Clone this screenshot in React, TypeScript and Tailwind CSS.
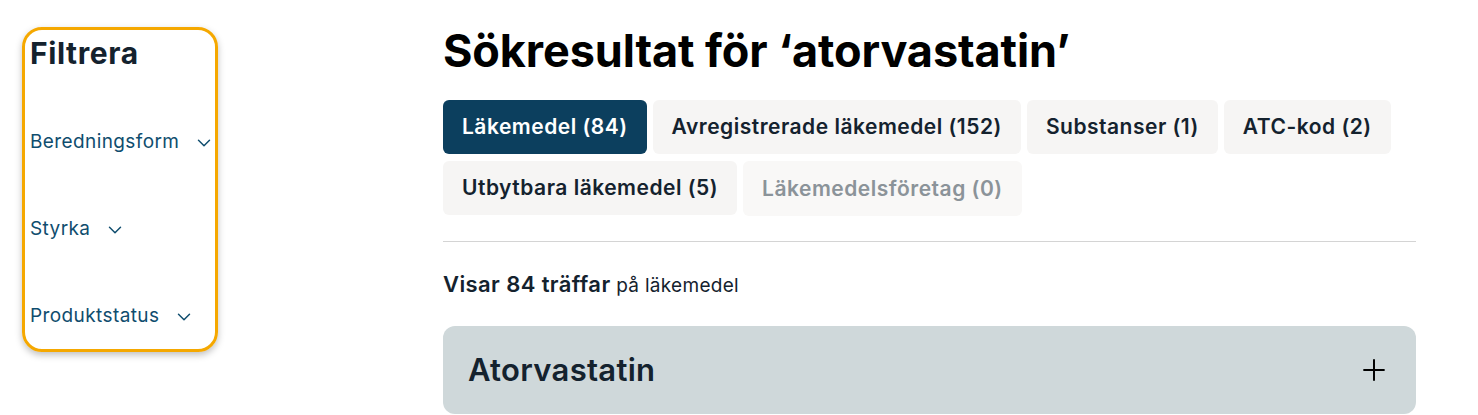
import { ChevronDown, Plus } from "lucide-react";

const tabs = [
  { label: "Läkemedel (84)", active: true },
  { label: "Avregistrerade läkemedel (152)" },
  { label: "Substanser (1)" },
  { label: "ATC-kod (2)" },
  { label: "Utbytbara läkemedel (5)" },
  { label: "Läkemedelsföretag (0)", disabled: true },
];

const filters = ["Beredningsform", "Styrka", "Produktstatus"];

export default function App() {
  return (
    <main className="min-h-screen bg-white font-['Inter',sans-serif] text-[#14222e]">
      <div className="flex">
        {/* Filter sidebar */}
        <aside className="ml-[22px] mt-[27px] w-[196px] shrink-0">
          <div className="h-[325px] rounded-[20px] border-[3px] border-[#f5a800] pl-[5px] shadow-[0_3px_7px_rgba(0,0,0,0.25)]">
            <h2 className="mt-[4px] text-[30px] font-bold leading-[38px] tracking-[0.6px]">Filtrera</h2>
            <ul className="mt-[58px] flex flex-col gap-[62px]">
              {filters.map((f) => (
                <li key={f} className="flex h-[25px] items-center gap-[14px] whitespace-nowrap text-[19px] tracking-[0.4px] text-[#0f4d6e]">
                  {f}
                  <ChevronDown className="h-[22px] w-[22px] shrink-0" strokeWidth={1.6} />
                </li>
              ))}
            </ul>
          </div>
        </aside>

        {/* Results */}
        <section className="ml-[225px] w-[973px]">
          <h1 className="mt-[24px] text-[45px] font-bold leading-[54px] tracking-[-0.1px] text-black">
            Sökresultat för ‘atorvastatin’
          </h1>
          <div className="mt-[22px] flex flex-wrap gap-x-[6px] gap-y-[7px]">
            {tabs.map((t) => (
              <button
                key={t.label}
                className={
                  t.active
                    ? "h-[54px] rounded-[6px] bg-[#0c3f5e] px-[19px] text-[21px] font-semibold tracking-[0.5px] text-white"
                    : t.disabled
                    ? "h-[55px] rounded-[6px] bg-[#f9f8f7] px-[19px] text-[21px] font-semibold tracking-[0.5px] text-[#8b9399]"
                    : "h-[54px] rounded-[6px] bg-[#f6f5f4] px-[19px] text-[21px] font-semibold tracking-[0.5px] text-[#14222e]"
                }
              >
                {t.label}
              </button>
            ))}
          </div>
          <hr className="mt-[25px] border-t border-[#d4d4d4]" />
          <p className="mt-[27px] text-[19px] leading-[30px] tracking-[0.3px]">
            <span className="text-[22px] font-semibold tracking-[0.4px]">Visar 84 träffar</span> på läkemedel
          </p>
          <div className="mt-[25px] flex h-[88px] items-center justify-between rounded-[12px] bg-[#cfd8da] pl-[25px] pr-[25px]">
            <span className="text-[31px] font-semibold tracking-[0.3px]">Atorvastatin</span>
            <Plus className="h-[34px] w-[34px] text-black" strokeWidth={1.4} />
          </div>
        </section>
      </div>
    </main>
  );
}
